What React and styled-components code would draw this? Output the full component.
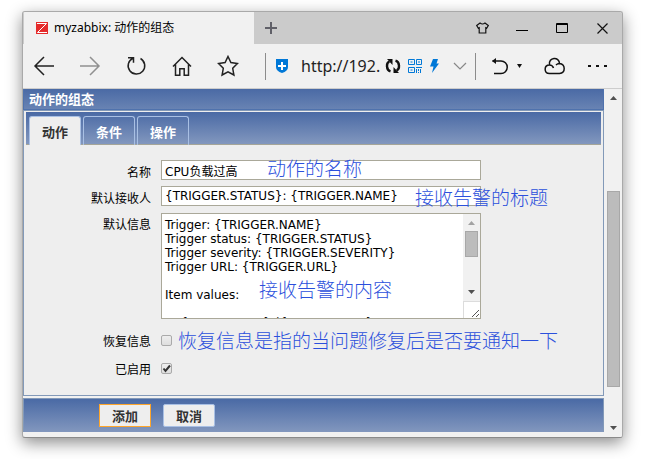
import React from "react";
import styled, { createGlobalStyle, css } from "styled-components";

const sans = `"Noto Sans", "Noto Sans CJK SC", sans-serif`;
const formSans = `"DejaVu Sans", "Noto Sans CJK SC", sans-serif`;
const blueFade = `linear-gradient(#4a6aa5, #8297be)`;

const GlobalStyle = createGlobalStyle`
  *, *::before, *::after { box-sizing: border-box; }
  body { margin: 0; background: #fff; font-family: ${sans}; font-size: 12px; color: #000; }
  button, input, textarea { font: inherit; color: inherit; margin: 0; }
  svg { display: block; flex: none; }
`;

const Desktop = styled.div`
  padding: 11px 22px 21px;
`;

const BrowserWindow = styled.div`
  border: 1px solid #a9a9a9;
  border-bottom-color: #8a8a8a;
  border-radius: 3px;
  background: #f1f1f1;
  box-shadow: 0 5px 16px rgba(0, 0, 0, 0.45);
  overflow: hidden;
`;

const TitleBar = styled.header`
  display: flex;
  height: 32px;
  background: #cbcbcb;
`;

const BrowserTab = styled.div`
  display: flex;
  align-items: center;
  gap: 6px;
  flex: 0 1 230px;
  margin-left: 1px;
  padding-left: 12px;
  background: #f1f1f1;
  line-height: 16px;
  white-space: nowrap;
`;

const IconButton = styled.button`
  display: flex;
  align-items: center;
  justify-content: center;
  flex: none;
  width: ${(p) => p.$width || "auto"};
  padding: 0;
  border: 0;
  background: none;
`;

const WindowControls = styled.div`
  display: flex;
  margin-left: auto;
`;

const Toolbar = styled.div`
  display: flex;
  align-items: center;
  height: 45px;
  border-bottom: 1px solid #cdcdcd;
`;

const NavButtons = styled.nav`
  display: flex;
  flex: none;
`;

const NavButton = styled(IconButton)`
  justify-content: flex-start;
  width: 46px;
  padding-left: 10px;
`;

const AddressBar = styled.div`
  display: flex;
  align-items: center;
  flex: 1;
  min-width: 0;
  margin-left: 12px;
  padding: 0 2px 0 9px;
  border: solid #8c8c8c;
  border-width: 0 1px;
  height: 27px;
`;

const AddressInput = styled.input`
  flex: 1;
  min-width: 0;
  width: 0;
  height: 24px;
  padding: 0;
  margin-left: 12px;
  border: 0;
  outline: 0;
  background: none;
  font-size: 16px;
  color: #222;
`;

const AddressIcons = styled.div`
  display: flex;
  align-items: center;
  gap: 7px;
`;

const ToolbarActions = styled.div`
  display: flex;
  align-items: center;
  padding: 0 14px 0 15px;
  gap: 22px;
`;

const UndoGroup = styled.div`
  display: flex;
  align-items: center;
  gap: 8px;
`;

const Viewport = styled.div`
  display: flex;
`;

const Page = styled.main`
  flex: 1;
  min-width: 0;
  padding-bottom: 5px;
`;

const PageTitle = styled.h1`
  margin: 0;
  padding: 1px 5px 0;
  border: 1px solid #4f72ad;
  border-top: 0;
  background: linear-gradient(#4a6aa5, #6883b3);
  color: #fff;
  font-family: ${formSans};
  font-size: 13px;
  line-height: 20px;
  height: 21px;
`;

const Panel = styled.form`
  display: block;
`;

const PanelBody = styled.div`
  border: 1px solid #8299b8;
  background: #eee;
  padding: 1px 2px 16px 2px;
`;

const TabList = styled.div`
  display: flex;
  gap: 2px;
  height: 33px;
  padding: 4px 3px 0;
  background: ${blueFade};
  border-bottom: 1px solid #a5a598;
`;

const Tab = styled.button`
  width: 52px;
  height: 29px;
  padding: 0;
  border: 1px solid #a9c0e4;
  border-bottom: 0;
  border-radius: 3px 3px 0 0;
  background: transparent;
  color: #fff;
  font-family: ${formSans};
  font-size: 13px;
  font-weight: bold;
  ${(p) =>
    p.$active &&
    css`
      background: #eee;
      color: #333;
    `}
`;

const Fields = styled.div`
  display: grid;
  grid-template-columns: 125px minmax(0, 320px);
  column-gap: 10px;
  row-gap: 6px;
  padding-top: 15px;
  font-family: ${formSans};
`;

const FieldLabel = styled.label`
  text-align: right;
  line-height: 18px;
  padding-top: 4px;
  height: 20px;
`;

const Field = styled.div`
  position: relative;
  display: flex;
`;

const TextInput = styled.input`
  width: 100%;
  height: 20px;
  padding: 0 3px;
  border: 1px solid #aaa899;
  background: #fff;
  outline: 0;
`;

const MessageBox = styled.div`
  display: flex;
  flex: 1;
  margin: 1px 0 4px;
  height: 106px;
  border: 1px solid #aaa899;
  background: #fff;
`;

const MessageText = styled.textarea`
  flex: 1;
  min-width: 0;
  padding: 4px 3px 0;
  border: 0;
  outline: 0;
  resize: none;
  overflow: hidden;
  background: none;
  line-height: 14px;
`;

const ScrollTrack = styled.div`
  display: flex;
  flex-direction: column;
  align-items: center;
  flex: none;
  width: ${(p) => p.$width};
  background: #f1f1f1;
`;

const ScrollThumb = styled.div`
  width: 13px;
  height: ${(p) => p.$height};
  margin-top: ${(p) => p.$top};
  border: 1px solid #a8a8a8;
  background: #bcbcbc;
`;

const ScrollButton = styled(IconButton)`
  width: 100%;
  height: 18px;
  ${(p) => p.$end && "margin-top: auto;"}
`;

const ResizeCorner = styled.div`
  display: flex;
  align-items: flex-end;
  justify-content: flex-end;
  width: 17px;
  height: 17px;
  border: solid #dcdcdc;
  border-width: 1px 0 0 1px;
  background: #fff;
`;

const CheckField = styled(Field)`
  height: 22px;
  align-items: center;
`;

const CheckBox = styled.input`
  appearance: none;
  width: 11px;
  height: 11px;
  border: 1px solid #aaa;
  border-radius: 2px;
  background: linear-gradient(#eee, #dedede);
  &:checked {
    background: url("data:image/svg+xml,%3Csvg xmlns='http://www.w3.org/2000/svg' viewBox='0 0 9 9'%3E%3Cpath d='M1.5 4.5 3.5 7 8 1.5' fill='none' stroke='%23333' stroke-width='2'/%3E%3C/svg%3E"),
      linear-gradient(#eee, #dedede);
  }
`;

const Note = styled.span`
  position: absolute;
  left: ${(p) => p.$left};
  top: ${(p) => p.$top};
  color: #2b50dc;
  font-family: "Noto Sans CJK SC", sans-serif;
  font-weight: 300;
  font-size: 19px;
  line-height: 24px;
  white-space: nowrap;
  pointer-events: none;
`;

const Footer = styled.footer`
  display: flex;
  gap: 12px;
  margin-top: 2px;
  padding: 5px 75px;
  border: 1px solid #8299b8;
  border-bottom: 0;
  background: ${blueFade};
`;

const FormButton = styled.button`
  width: 52px;
  height: 23px;
  padding: 0;
  border: 1px solid ${(p) => (p.$primary ? "#ffa62b" : "#a9c0e4")};
  border-radius: ${(p) => (p.$primary ? "0" : "2px")};
  background: #eee;
  color: #333;
  font-family: ${formSans};
  font-size: 13px;
  font-weight: bold;
`;

const Glyph = ({ w, h, color = "#222", sw = 1.5, children }) => (
  <svg width={w} height={h} viewBox={`0 0 ${w} ${h}`} fill="none" stroke={color} strokeWidth={sw} aria-hidden="true">
    {children}
  </svg>
);

const Arrow = ({ up, color = "#505050" }) => (
  <Glyph w={7} h={4} color="none">
    <path d={up ? "M0 4 3.5 0 7 4z" : "M0 0h7L3.500 4z"} fill={color} />
  </Glyph>
);

const message = `Trigger: {TRIGGER.NAME}
Trigger status: {TRIGGER.STATUS}
Trigger severity: {TRIGGER.SEVERITY}
Trigger URL: {TRIGGER.URL}

Item values:

1. {ITEM.NAME1} ({HOST.NAME1}:{ITEM.KEY1}): {ITEM.VALUE1}`;

function TopBar() {
  return (
    <TitleBar>
      <BrowserTab>
        <Glyph w={12} h={12} color="#fff" sw={1}>
          <path d="M0 0h12v12H0z" fill="#e52b2b" stroke="none" />
          <path d="M1 1.500h9.500L1.500 10.500H11" />
        </Glyph>
        myzabbix: 动作的组态
      </BrowserTab>
      <IconButton $width="34px" aria-label="新标签页">
        <Glyph w={12} h={12} color="#606068" sw={2}>
          <path d="M6 0v12M0 6h12" />
        </Glyph>
      </IconButton>
      <WindowControls>
        <IconButton $width="40px" aria-label="皮肤">
          <Glyph w={13} h={12} color="#111" sw={1.2}>
            <path d="M4 1Q6.500 3 9 1l3.300 2.500-1.600 2.700-.9-.5V11H3.200V5.700l-.9.500L.7 3.500z" />
          </Glyph>
        </IconButton>
        <IconButton $width="40px" aria-label="最小化">
          <Glyph w={12} h={12} color="#000" sw={1}>
            <path d="M0 8.500h12" />
          </Glyph>
        </IconButton>
        <IconButton $width="40px" aria-label="最大化">
          <Glyph w={12} h={10} color="#000" sw={1}>
            <path d="M.5.5h11v9H.5zM0 1.500h12" />
          </Glyph>
        </IconButton>
        <IconButton $width="40px" aria-label="关闭">
          <Glyph w={11} h={11} color="#111" sw={1.2}>
            <path d="M.5.5l10 10M10.500.5l-10 10" />
          </Glyph>
        </IconButton>
      </WindowControls>
    </TitleBar>
  );
}

function BrowserToolbar() {
  return (
    <Toolbar>
      <NavButtons>
        <NavButton aria-label="后退">
          <Glyph w={24} h={24}>
            <path d="M21 12H2M11 3l-9 9 9 9" />
          </Glyph>
        </NavButton>
        <NavButton aria-label="前进">
          <Glyph w={24} h={24} color="#909090">
            <path d="M1 12h19M11 3l9 9-9 9" />
          </Glyph>
        </NavButton>
        <NavButton aria-label="刷新">
          <Glyph w={24} h={24}>
            <path d="M15.500 4.500A8.300 8.300 0 1 1 8 4.200M3 3.700h5.500v5" />
          </Glyph>
        </NavButton>
        <NavButton aria-label="主页">
          <Glyph w={24} h={24}>
            <path d="M2 12.500 11 3.500l9 9M4.500 10.500v10.700h4.300v-6.400h4.400v6.400h4.300V10.500" />
          </Glyph>
        </NavButton>
        <NavButton aria-label="收藏">
          <Glyph w={24} h={24}>
            <path d="M11 2.500l2.900 6.100 6.500.9-4.700 4.800 1.200 6.700-5.900-3.200-5.900 3.200 1.200-6.700L1.600 9.500l6.500-.9z" />
          </Glyph>
        </NavButton>
      </NavButtons>
      <AddressBar>
        <Glyph w={14} h={14} color="#fff" sw={2}>
          <path d="M1 0h12v8q0 4-6 6-6-2-6-6z" fill="#0078d7" stroke="none" />
          <path d="M7 3v8M3 7h8" />
        </Glyph>
        <AddressInput aria-label="地址" defaultValue="http://192." />
        <AddressIcons>
          <Glyph w={16} h={16} color="#111" sw={2.4}>
            <path d="M5.500 13.300C1 12 1 4.500 4.500 3.700M10.500 2.700C15 4 15 11.500 11.500 12.300" />
            <path d="M2 1h5.500v6zM14 15H8.500V9z" fill="#111" stroke="none" />
          </Glyph>
          <Glyph w={14} h={14} color="#0078d7" sw={1}>
            <path d="M.5.5h6v5h-6zM8.500.5h5v5h-5zM.5 8.500h6v5h-6zM2.500 3h2M10 3h2M2.500 11h2M8 8.500h6M8.500 10v4M10.500 10v2M10.500 13v1M12.500 10v4" />
          </Glyph>
          <Glyph w={11} h={14} color="none">
            <path d="M4 0h5L7.500 4.500H10L3 14l1.500-6.500H1z" fill="#0078d7" />
          </Glyph>
          <IconButton $width="26px" aria-label="更多地址">
            <Glyph w={14} h={9} color="#888" sw={1.2}>
              <path d="M1 1l6 6 6-6" />
            </Glyph>
          </IconButton>
        </AddressIcons>
      </AddressBar>
      <ToolbarActions>
        <UndoGroup>
          <IconButton aria-label="恢复">
            <Glyph w={18} h={18} color="#111">
              <path d="M1.500 4H10a6 6 0 0 1 0 12.500H3" />
              <path d="M1 4l4-3v6z" fill="#111" stroke="none" />
            </Glyph>
          </IconButton>
          <IconButton aria-label="恢复列表">
            <Glyph w={5} h={4} color="none">
              <path d="M0 0h5L2.500 4z" fill="#111" />
            </Glyph>
          </IconButton>
        </UndoGroup>
        <IconButton aria-label="云">
          <Glyph w={22} h={18} color="#111">
            <path d="M5.500 16.500C-.3 16.500-.3 8 5.500 8 4-.2 15.500-.7 15.500 6.500c6 .5 6.500 9.500 0 10zM5.500 8q3 0 4 3M15.500 6.500q-2 0-3.500 1.500" />
          </Glyph>
        </IconButton>
        <IconButton aria-label="菜单">
          <Glyph w={20} h={4} color="none">
            <path d="M0 1h3v2H0zM8 1h3v2H8zM16 1h3v2h-3z" fill="#111" />
          </Glyph>
        </IconButton>
      </ToolbarActions>
    </Toolbar>
  );
}

function ActionForm() {
  return (
    <Panel onSubmit={(e) => e.preventDefault()}>
      <PanelBody>
        <TabList role="tablist">
          <Tab type="button" role="tab" aria-selected="true" $active>动作</Tab>
          <Tab type="button" role="tab" aria-selected="false">条件</Tab>
          <Tab type="button" role="tab" aria-selected="false">操作</Tab>
        </TabList>
        <Fields>
          <FieldLabel htmlFor="name">名称</FieldLabel>
          <Field>
            <TextInput id="name" defaultValue="CPU负载过高" />
            <Note $left="106px" $top="-4px">动作的名称</Note>
          </Field>
          <FieldLabel htmlFor="subject">默认接收人</FieldLabel>
          <Field>
            <TextInput id="subject" defaultValue="{TRIGGER.STATUS}: {TRIGGER.NAME}" />
            <Note $left="254px" $top="-1px">接收告警的标题</Note>
          </Field>
          <FieldLabel htmlFor="message">默认信息</FieldLabel>
          <Field>
            <MessageBox>
              <MessageText id="message" defaultValue={message} />
              <ScrollTrack $width="17px">
                <ScrollButton type="button" aria-label="向上滚动">
                  <Arrow up color="#a3a3a3" />
                </ScrollButton>
                <ScrollThumb $height="26px" $top="-1px" />
                <ScrollButton type="button" aria-label="向下滚动" $end>
                  <Arrow />
                </ScrollButton>
                <ResizeCorner>
                  <Glyph w={9} h={9} color="#555" sw={1}>
                    <path d="M1 8l7-7M5 8l3-3" />
                  </Glyph>
                </ResizeCorner>
              </ScrollTrack>
            </MessageBox>
            <Note $left="98px" $top="65px">接收告警的内容</Note>
          </Field>
          <FieldLabel htmlFor="recovery">恢复信息</FieldLabel>
          <CheckField>
            <CheckBox id="recovery" type="checkbox" />
            <Note $left="17px" $top="-1px">恢复信息是指的当问题修复后是否要通知一下</Note>
          </CheckField>
          <FieldLabel htmlFor="enabled">已启用</FieldLabel>
          <CheckField>
            <CheckBox id="enabled" type="checkbox" defaultChecked />
          </CheckField>
        </Fields>
      </PanelBody>
      <Footer>
        <FormButton type="submit" $primary>添加</FormButton>
        <FormButton type="button">取消</FormButton>
      </Footer>
    </Panel>
  );
}

export default function App() {
  return (
    <Desktop>
      <GlobalStyle />
      <BrowserWindow>
        <TopBar />
        <BrowserToolbar />
        <Viewport>
          <Page>
            <PageTitle>动作的组态</PageTitle>
            <ActionForm />
          </Page>
          <ScrollTrack $width="18px">
            <ScrollButton aria-label="页面向上">
              <Arrow up />
            </ScrollButton>
            <ScrollThumb $height="196px" $top="84px" />
            <ScrollButton aria-label="页面向下" $end>
              <Arrow />
            </ScrollButton>
          </ScrollTrack>
        </Viewport>
      </BrowserWindow>
    </Desktop>
  );
}
